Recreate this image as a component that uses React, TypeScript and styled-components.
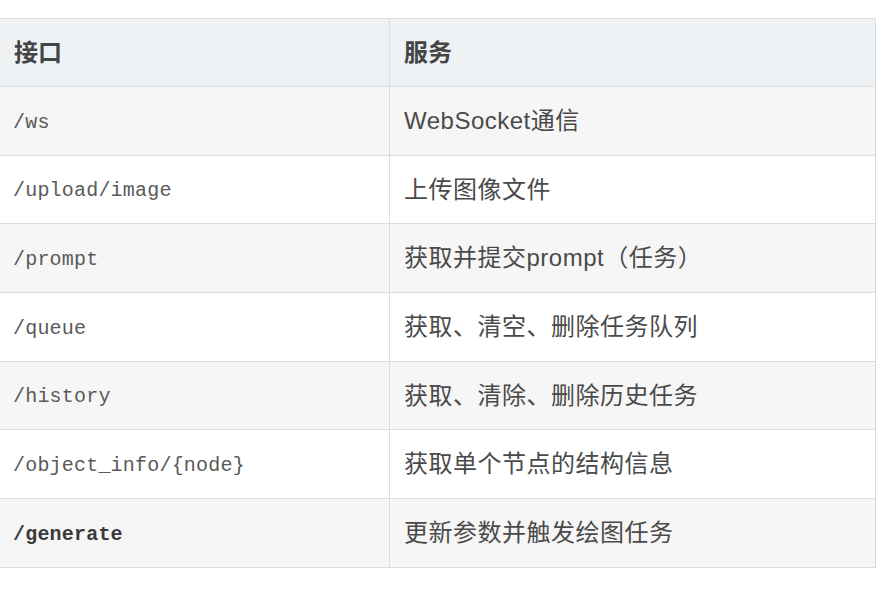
import React from "react";
import styled, { createGlobalStyle } from "styled-components";

const Global = createGlobalStyle`
  html, body { margin: 0; padding: 0; background: #ffffff; }
  body { font-family: "Liberation Sans", "Noto Sans CJK SC", sans-serif; }
`;

const Page = styled.div`
  padding-top: 18px;
  margin-left: -1px;
`;

const Table = styled.table`
  width: 877px;
  border-collapse: collapse;
  table-layout: fixed;
  font-family: "Liberation Sans", "Noto Sans CJK SC", sans-serif;
  font-size: 24px;
  color: #4a4a4a;
`;

const HeadRow = styled.tr`
  background: #eef2f5;
  height: 68px;
`;

const Row = styled.tr<{ $alt: boolean }>`
  background: ${(p) => (p.$alt ? "#f6f6f6" : "#ffffff")};
  height: 68.7px;
`;

const Th = styled.th<{ $w?: number }>`
  width: ${(p) => (p.$w ? `${p.$w}px` : "auto")};
  border: 1px solid #dcdcdc;
  padding: 0 14px;
  line-height: 30px;
  text-align: left;
  font-weight: 700;
  color: #444444;
`;

const Td = styled.td`
  border: 1px solid #dcdcdc;
  padding: 0 14px;
  line-height: 30px;
  text-align: left;
  vertical-align: middle;
  white-space: nowrap;
  letter-spacing: 0.5px;
`;

const Code = styled.span<{ $strong?: boolean }>`
  display: inline-block;
  vertical-align: middle;
  line-height: 24px;
  margin-left: -1px;
  font-family: "Liberation Mono", "Noto Sans CJK SC", monospace;
  font-size: 20px;
  letter-spacing: 0.2px;
  color: ${(p) => (p.$strong ? "#3a3a3a" : "#5a5a5a")};
  font-weight: ${(p) => (p.$strong ? 700 : 400)};
`;

const rows: { api: string; desc: string; strong?: boolean }[] = [
  { api: "/ws", desc: "WebSocket通信" },
  { api: "/upload/image", desc: "上传图像文件" },
  { api: "/prompt", desc: "获取并提交prompt（任务）" },
  { api: "/queue", desc: "获取、清空、删除任务队列" },
  { api: "/history", desc: "获取、清除、删除历史任务" },
  { api: "/object_info/{node}", desc: "获取单个节点的结构信息" },
  { api: "/generate", desc: "更新参数并触发绘图任务", strong: true },
];

export default function App() {
  return (
    <>
      <Global />
      <Page>
        <Table>
          <thead>
            <HeadRow>
              <Th $w={361}>接口</Th>
              <Th>服务</Th>
            </HeadRow>
          </thead>
          <tbody>
            {rows.map((r, i) => (
              <Row key={r.api} $alt={i % 2 === 0}>
                <Td>
                  <Code $strong={r.strong}>{r.api}</Code>
                </Td>
                <Td>{r.desc}</Td>
              </Row>
            ))}
          </tbody>
        </Table>
      </Page>
    </>
  );
}
